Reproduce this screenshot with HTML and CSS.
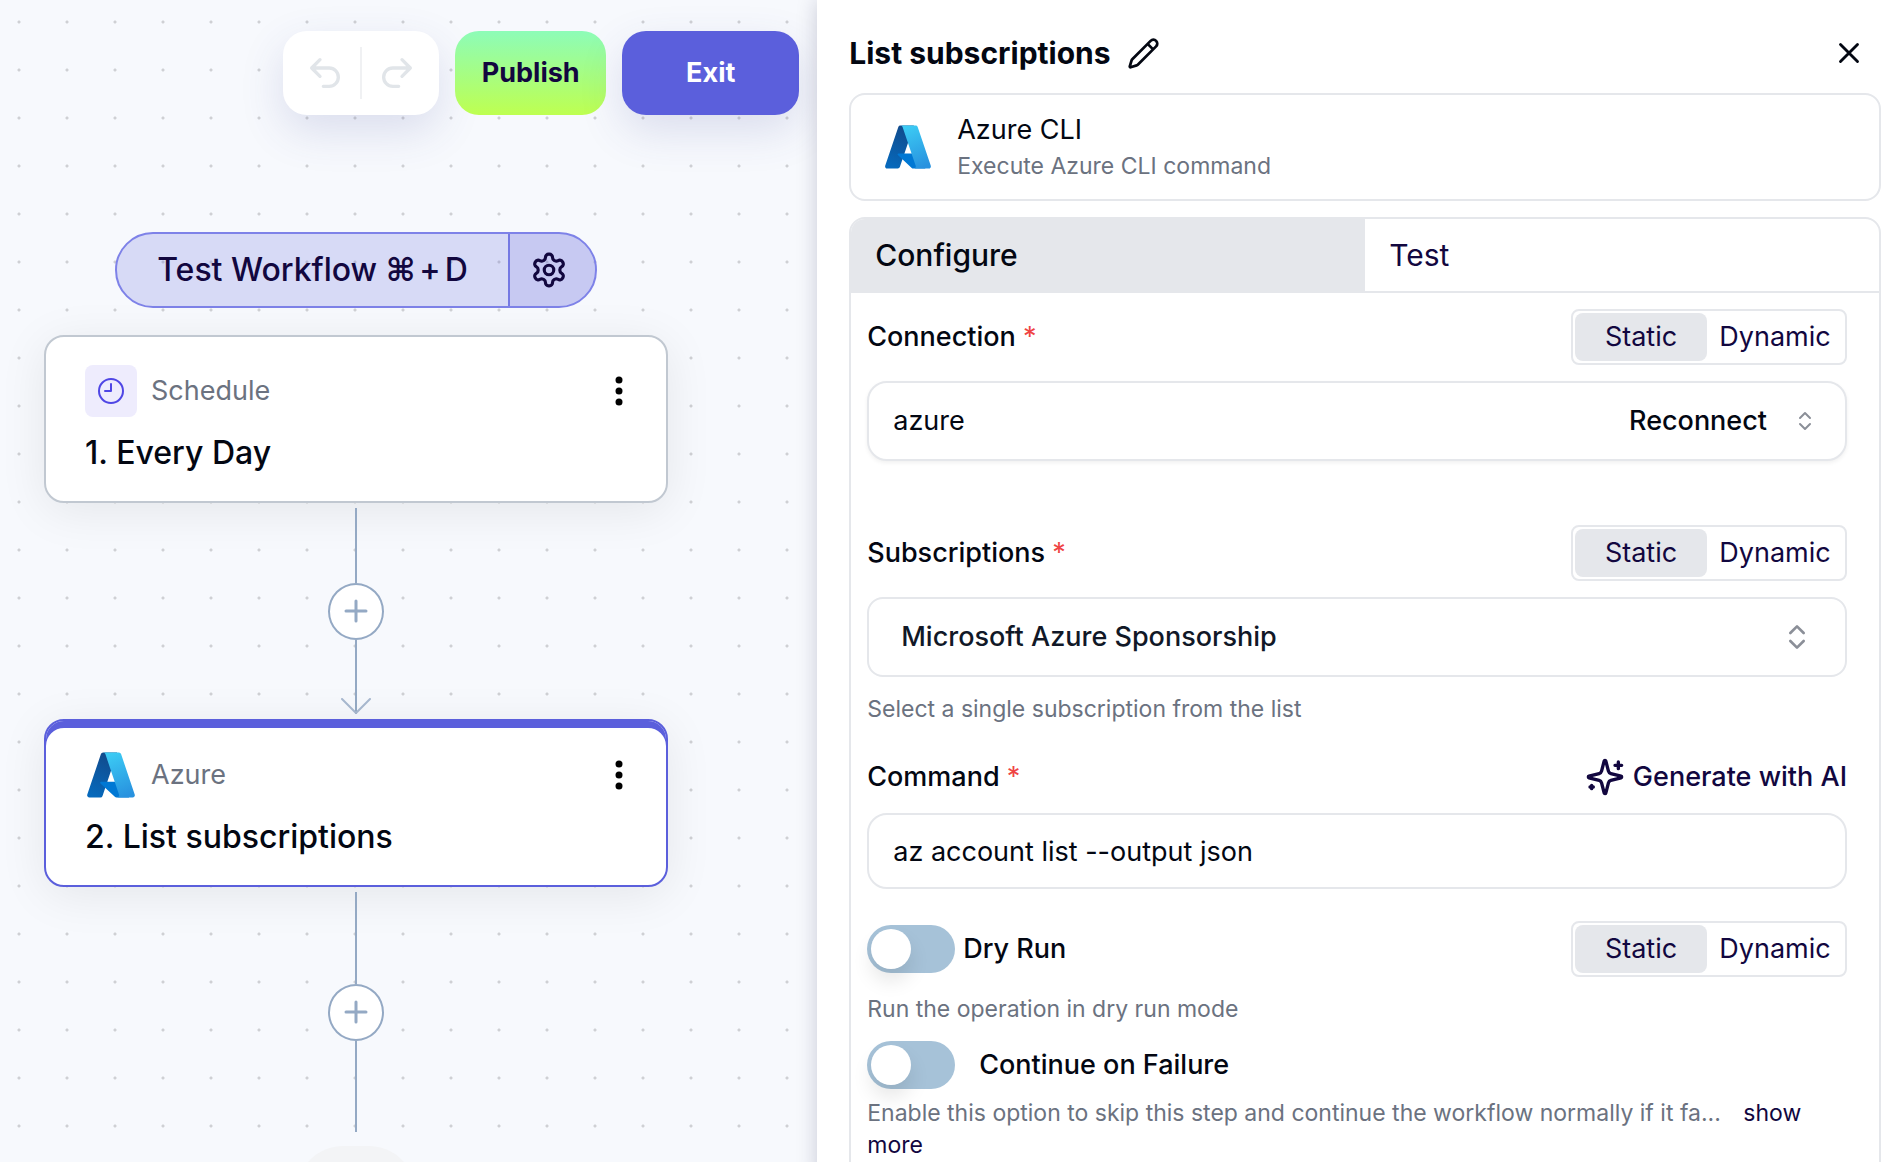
FILE: index.html
```html
<!DOCTYPE html>
<html lang="en">
<head>
    <meta charset="UTF-8">
    <meta name="viewport" content="width=device-width, initial-scale=1.0">
    <title>Workflow Editor</title>
    <link rel="stylesheet" href="styles.css">
</head>
<body>
    <!-- Shared icons -->
    <svg class="sprite" aria-hidden="true">
        <defs>
            <linearGradient id="azureDark" x1="0.6" y1="0" x2="0.3" y2="1">
                <stop offset="0" stop-color="#114a8b" />
                <stop offset="1" stop-color="#0669bc" />
            </linearGradient>
            <linearGradient id="azureLight" x1="0.3" y1="0" x2="0.6" y2="1">
                <stop offset="0" stop-color="#3ccbf4" />
                <stop offset="1" stop-color="#2892df" />
            </linearGradient>
        </defs>
        <symbol id="azure" viewBox="0 0 96 96">
            <path fill="url(#azureDark)" d="M33.338 6.544h26.038l-27.03 80.087a4.152 4.152 0 0 1-3.933 2.824H8.149a4.145 4.145 0 0 1-3.928-5.47L29.404 9.368a4.152 4.152 0 0 1 3.934-2.825z" />
            <path fill="#0078d4" d="M71.175 60.261h-41.29a1.911 1.911 0 0 0-1.305 3.309l26.532 24.764a4.171 4.171 0 0 0 2.846 1.121h23.38z" />
            <path fill="url(#azureLight)" d="M66.595 9.364a4.145 4.145 0 0 0-3.928-2.82H33.648a4.146 4.146 0 0 1 3.928 2.82l25.184 74.62a4.146 4.146 0 0 1-3.928 5.472h29.02a4.146 4.146 0 0 0 3.927-5.472z" />
        </symbol>
        <symbol id="dots" viewBox="0 0 8 32">
            <circle cx="4" cy="5" r="3.5" />
            <circle cx="4" cy="16" r="3.5" />
            <circle cx="4" cy="27" r="3.5" />
        </symbol>
        <symbol id="updown" viewBox="0 0 24 24">
            <path d="m7 15 5 5 5-5M7 9l5-5 5 5" />
        </symbol>
        <symbol id="plus" viewBox="0 0 24 24">
            <path d="M2 12h20M12 2v20" />
        </symbol>
    </svg>

    <div class="editor">
        <!-- Left side: workflow canvas -->
        <main class="canvas">
            <div class="toolbar">
                <div class="history">
                    <button class="icon-btn" type="button" aria-label="Undo" disabled>
                        <svg class="icon" width="40" height="40" viewBox="0 0 24 24"><path d="M9 14 4 9l5-5M4 9h10.500a5.500 5.500 0 0 1 0 11H11" /></svg>
                    </button>
                    <span class="history-divider"></span>
                    <button class="icon-btn" type="button" aria-label="Redo" disabled>
                        <svg class="icon" width="40" height="40" viewBox="0 0 24 24"><path d="m15 14 5-5-5-5M20 9H9.500a5.500 5.500 0 0 0 0 11H13" /></svg>
                    </button>
                </div>
                <button class="btn btn-publish" type="button">Publish</button>
                <button class="btn btn-exit" type="button">Exit</button>
            </div>

            <div class="flow">
                <div class="test-bar">
                    <button class="test-run" type="button">Test Workflow <span class="keys">⌘</span>+<span class="key-letter">D</span></button>
                    <button class="test-settings" type="button" aria-label="Test settings">
                        <svg class="icon" width="38" height="38" viewBox="0 0 24 24"><path d="M12.220 2h-.440a2 2 0 0 0-2 2v.180a2 2 0 0 1-1 1.730l-.430.250a2 2 0 0 1-2 0l-.150-.080a2 2 0 0 0-2.730.730l-.220.380a2 2 0 0 0 .730 2.730l.150.100a2 2 0 0 1 1 1.720v.510a2 2 0 0 1-1 1.740l-.150.090a2 2 0 0 0-.730 2.730l.220.380a2 2 0 0 0 2.730.730l.150-.080a2 2 0 0 1 2 0l.430.250a2 2 0 0 1 1 1.730V20a2 2 0 0 0 2 2h.440a2 2 0 0 0 2-2v-.180a2 2 0 0 1 1-1.730l.430-.250a2 2 0 0 1 2 0l.150.080a2 2 0 0 0 2.730-.730l.220-.390a2 2 0 0 0-.730-2.730l-.150-.080a2 2 0 0 1-1-1.740v-.500a2 2 0 0 1 1-1.740l.150-.090a2 2 0 0 0 .730-2.730l-.220-.380a2 2 0 0 0-2.730-.730l-.150.080a2 2 0 0 1-2 0l-.430-.250a2 2 0 0 1-1-1.730V4a2 2 0 0 0-2-2z" /><circle cx="12" cy="12" r="3" /></svg>
                    </button>
                </div>

                <section class="node">
                    <div class="node-head">
                        <span class="node-tile">
                            <svg class="icon" width="28" height="28" viewBox="0 0 28 28"><circle cx="14" cy="14" r="12" /><path d="M14 7v7H8" /></svg>
                        </span>
                        <span class="node-type">Schedule</span>
                        <button class="icon-btn node-menu" type="button" aria-label="Step menu"><svg width="8" height="32"><use href="#dots" /></svg></button>
                    </div>
                    <h2 class="node-title">1. Every Day</h2>
                </section>

                <div class="connector">
                    <span class="line"></span>
                    <button class="add-btn" type="button" aria-label="Add step"><svg class="icon" width="24" height="24"><use href="#plus" /></svg></button>
                    <span class="line line-arrow">
                        <svg class="icon" width="30" height="16" viewBox="0 0 30 16"><path d="m1 1 14 14L29 1" /></svg>
                    </span>
                </div>

                <section class="node node-active">
                    <div class="node-head">
                        <svg width="52" height="52"><use href="#azure" /></svg>
                        <span class="node-type">Azure</span>
                        <button class="icon-btn node-menu" type="button" aria-label="Step menu"><svg width="8" height="32"><use href="#dots" /></svg></button>
                    </div>
                    <h2 class="node-title">2. List subscriptions</h2>
                </section>

                <div class="connector connector-last">
                    <span class="line"></span>
                    <button class="add-btn" type="button" aria-label="Add step"><svg class="icon" width="24" height="24"><use href="#plus" /></svg></button>
                    <span class="line"></span>
                </div>

                <div class="end-node"></div>
            </div>
        </main>

        <!-- Right side: step settings -->
        <aside class="panel">
            <header class="panel-head">
                <h1 class="panel-title">List subscriptions</h1>
                <button class="icon-btn" type="button" aria-label="Rename step">
                    <svg class="icon" width="33" height="33" viewBox="0 0 24 24"><path d="M21.174 6.812a1 1 0 0 0-3.986-3.987L3.842 16.174a2 2 0 0 0-.500.830l-1.321 4.352a.500.500 0 0 0 .623.622l4.353-1.320a2 2 0 0 0 .830-.497zM15 5l4 4" /></svg>
                </button>
                <button class="icon-btn close-btn" type="button" aria-label="Close">
                    <svg class="icon" width="34" height="34" viewBox="0 0 24 24"><path d="M18 6 6 18M6 6l12 12" /></svg>
                </button>
            </header>

            <div class="action-card">
                <svg width="50" height="50"><use href="#azure" /></svg>
                <div class="action-text">
                    <div class="action-name">Azure CLI</div>
                    <div class="hint">Execute Azure CLI command</div>
                </div>
            </div>

            <div class="settings">
                <div class="tabs" role="tablist">
                    <button class="tab tab-active" type="button" role="tab" aria-selected="true">Configure</button>
                    <button class="tab" type="button" role="tab" aria-selected="false">Test</button>
                </div>

                <form class="form">
                    <div class="field-head">
                        <label class="label" for="connection">Connection <span class="required">*</span></label>
                        <div class="mode">
                            <button class="mode-btn mode-active" type="button">Static</button>
                            <button class="mode-btn" type="button">Dynamic</button>
                        </div>
                    </div>
                    <div class="box box-connection">
                        <select class="control" id="connection">
                            <option>azure</option>
                        </select>
                        <button class="reconnect" type="button">Reconnect</button>
                        <svg class="icon chevrons" width="24" height="24"><use href="#updown" /></svg>
                    </div>

                    <div class="field-head">
                        <label class="label" for="subscriptions">Subscriptions <span class="required">*</span></label>
                        <div class="mode">
                            <button class="mode-btn mode-active" type="button">Static</button>
                            <button class="mode-btn" type="button">Dynamic</button>
                        </div>
                    </div>
                    <div class="box box-subscriptions">
                        <select class="control" id="subscriptions">
                            <option>Microsoft Azure Sponsorship</option>
                        </select>
                        <svg class="icon chevrons" width="32" height="32"><use href="#updown" /></svg>
                    </div>
                    <p class="hint">Select a single subscription from the list</p>

                    <div class="field-head field-head-command">
                        <label class="label" for="command">Command <span class="required">*</span></label>
                        <button class="generate" type="button">
                            <svg class="icon" width="40" height="40" viewBox="0 0 24 24"><path d="M9.937 15.500A2 2 0 0 0 8.500 14.063l-6.135-1.582a.500.500 0 0 1 0-.962L8.500 9.936A2 2 0 0 0 9.937 8.500l1.582-6.135a.500.500 0 0 1 .963 0L14.063 8.500A2 2 0 0 0 15.500 9.937l6.135 1.581a.500.500 0 0 1 0 .964L15.500 14.063a2 2 0 0 0-1.437 1.437l-1.582 6.135a.500.500 0 0 1-.963 0zM20 3v4M22 5h-4M4 17v2M5 18H3" /></svg>
                            Generate with AI
                        </button>
                    </div>
                    <input class="box command" type="text" id="command" value="az account list --output json">

                    <div class="field-head field-head-switch">
                        <label class="label switch-label"><input class="switch" type="checkbox">Dry Run</label>
                        <div class="mode">
                            <button class="mode-btn mode-active" type="button">Static</button>
                            <button class="mode-btn" type="button">Dynamic</button>
                        </div>
                    </div>
                    <p class="hint">Run the operation in dry run mode</p>

                    <label class="label switch-label switch-label-wide"><input class="switch" type="checkbox">Continue on Failure</label>
                    <p class="hint hint-failure">Enable this option to skip this step and continue the workflow normally if it fa... <a class="more" href="#">show more</a></p>
                </form>
            </div>
        </aside>
    </div>
</body>
</html>
```
FILE: styles.css
```css
/* Global Styles */
* {
    box-sizing: border-box;
}

body {
    margin: 0;
    font-family: 'Inter', 'Liberation Sans', sans-serif;
    font-size: 27px;
    line-height: 36px;
    color: #030712;
    background: #fff;
}

h1, h2, p {
    margin: 0;
}

button, input, select {
    font: inherit;
    color: inherit;
}

button {
    padding: 0;
    border: none;
    background: none;
    cursor: pointer;
}

svg {
    display: block;
    flex-shrink: 0;
}

.sprite {
    position: absolute;
    width: 0;
    height: 0;
}

.icon {
    fill: none;
    stroke: currentColor;
    stroke-width: 2;
    stroke-linecap: round;
    stroke-linejoin: round;
}

.icon-btn {
    display: flex;
    align-items: center;
    justify-content: center;
}

.editor {
    display: grid;
    grid-template-columns: 25fr 33fr;
    height: 100vh;
    overflow: hidden;
}

/* Canvas */
.canvas {
    overflow: hidden;
    background-color: #f7f9fd;
    background-image: radial-gradient(circle, #cfd0d4 1px, transparent 2px);
    background-size: 48px 48px;
    background-position: -5px -2px;
}

.toolbar {
    display: flex;
    justify-content: flex-end;
    gap: 16px;
    padding: 31px 18px 0;
}

.history {
    display: flex;
    align-items: center;
    justify-content: center;
    gap: 15px;
    width: 156px;
    height: 84px;
    border-radius: 24px;
    background: #fff;
    color: #e1e5e9;
    box-shadow: 0 16px 44px rgba(60, 64, 150, 0.15);
}

.history-divider {
    width: 2px;
    height: 52px;
    background: #f0f1f3;
}

.btn {
    height: 84px;
    border-radius: 24px;
    font-weight: 700;
}

.btn-publish {
    width: 151px;
    color: #12073f;
    background: linear-gradient(#8dfcb8, #beff50);
}

.btn-exit {
    width: 177px;
    color: #fff;
    background: #5b5fdc;
    box-shadow: 0 16px 44px rgba(60, 64, 150, 0.15);
}

.flow {
    display: flex;
    flex-direction: column;
    align-items: center;
    width: 624px;
    margin: 117px 0 0 44px;
}

/* Test button */
.test-bar {
    display: flex;
    width: 482px;
    height: 76px;
    margin-bottom: 27px;
    border: 2px solid #7e82e8;
    border-radius: 38px;
    overflow: hidden;
    color: #12073f;
    background: rgba(91, 95, 220, 0.2);
}

.test-run {
    flex: 1;
    font-size: 32px;
    font-weight: 500;
}

.keys {
    margin-right: 4px;
    font-family: 'DejaVu Sans', sans-serif;
    font-weight: 700;
}

.key-letter {
    margin-left: 4px;
}

.test-settings {
    display: flex;
    align-items: center;
    justify-content: center;
    width: 87px;
    padding-right: 8px;
    border-left: 2px solid #7579e3;
    background: rgba(91, 95, 220, 0.13);
}

/* Nodes */
.node {
    width: 100%;
    height: 168px;
    padding: 28px 39px;
    border: 2px solid #c1c8d1;
    border-radius: 20px;
    background: #fff;
    box-shadow: 0 8px 48px rgba(0, 0, 0, 0.08);
}

.node-active {
    border-color: #5b5fdc;
    box-shadow: inset 0 7px #5b5fdc, 0 8px 48px rgba(0, 0, 0, 0.08);
}

.node-head {
    display: flex;
    align-items: center;
    gap: 14px;
    margin-bottom: 14px;
}

.node-tile {
    display: flex;
    align-items: center;
    justify-content: center;
    width: 52px;
    height: 52px;
    border-radius: 8px;
    color: #4f46e5;
    background: #eeecfd;
}

.node-type {
    flex: 1;
    color: #6b7280;
}

.node-menu {
    width: 16px;
}

.node-title {
    font-size: 32px;
    font-weight: 500;
    line-height: 44px;
}

/* Connectors */
.connector {
    display: flex;
    flex-direction: column;
    align-items: center;
    height: 216px;
    padding: 5px 0;
}

.connector-last {
    height: 259px;
    padding-bottom: 14px;
}

.line {
    flex: 1;
    width: 2px;
    background: #94a9c4;
}

.line-arrow {
    display: flex;
    align-items: flex-end;
    justify-content: center;
    color: #a9b9d0;
}

.add-btn {
    display: flex;
    align-items: center;
    justify-content: center;
    width: 56px;
    height: 57px;
    border: 2px solid #94a9c4;
    border-radius: 50%;
    color: #94a9c4;
    background: #fff;
}

.add-btn .icon {
    stroke-width: 3;
}

.end-node {
    width: 118px;
    height: 92px;
    border-radius: 46px;
    background: #f3f4f6;
}

/* Panel */
.panel {
    position: relative;
    padding: 31px 15px 0 32px;
    background: #fff;
    box-shadow: 0 0 20px rgba(20, 20, 60, 0.2);
}

.panel-head {
    display: flex;
    align-items: center;
    gap: 16px;
    height: 44px;
    margin-bottom: 18px;
}

.panel-title {
    font-size: 30px;
    font-weight: 700;
}

.close-btn {
    margin-left: auto;
    margin-right: 15px;
}

.action-card {
    display: flex;
    align-items: center;
    gap: 24px;
    height: 108px;
    margin-bottom: 16px;
    padding-left: 32px;
    border: 2px solid #e5e7eb;
    border-radius: 16px;
}

.action-text {
    display: grid;
    gap: 2px;
}

.hint {
    font-size: 23px;
    line-height: 32px;
    color: #6b7280;
}

.settings {
    border: 2px solid #e5e7eb;
    border-radius: 16px;
    overflow: hidden;
}

.tabs {
    display: flex;
    border-bottom: 2px solid #e5e7eb;
}

.tab {
    flex: 1;
    height: 72px;
    padding: 0 24px;
    font-size: 30px;
    text-align: left;
    color: #12073f;
}

.tab-active {
    font-weight: 500;
    color: #030712;
    background: #e5e7eb;
}

/* Form */
.form {
    padding: 16px 32px 16px 16px;
}

.field-head {
    display: flex;
    align-items: center;
    justify-content: space-between;
    margin-bottom: 16px;
}

.field-head-command {
    height: 40px;
    margin-top: 32px;
}

.field-head-switch {
    margin-top: 32px;
}

.label {
    font-weight: 500;
}

.required {
    font-weight: 400;
    color: #ef4444;
}

.mode {
    display: flex;
    width: 276px;
    height: 56px;
    padding: 2px;
    border: 2px solid #e5e7eb;
    border-radius: 8px;
}

.mode-btn {
    flex: 1;
    border-radius: 8px;
    color: #12073f;
}

.mode-active {
    flex: 0 0 132px;
    background: #e5e7eb;
}

.box {
    display: flex;
    align-items: center;
    width: 100%;
    height: 80px;
    border: 2px solid #e5e7eb;
    border-radius: 20px;
    background: #fff;
}

.box-connection {
    margin-bottom: 64px;
    padding: 0 28px 0 24px;
    box-shadow: 0 2px 4px rgba(0, 0, 0, 0.06);
}

.box-subscriptions {
    margin-bottom: 16px;
    padding: 0 32px;
    border-radius: 16px;
    font-weight: 500;
    color: #111827;
}

.control {
    flex: 1;
    min-width: 0;
    height: 100%;
    padding: 0;
    border: none;
    outline: none;
    appearance: none;
    background: none;
}

.reconnect {
    margin-right: 26px;
    font-weight: 500;
}

.chevrons {
    color: #8b8f98;
}

.generate {
    display: flex;
    align-items: center;
    gap: 8px;
    font-weight: 500;
    color: #12073f;
}

.command {
    height: 76px;
    padding: 0 24px;
}

/* Switches */
.switch-label {
    display: flex;
    align-items: center;
    gap: 8px;
}

.switch-label-wide {
    gap: 24px;
    margin: 16px 0 8px;
}

.switch {
    width: 88px;
    height: 48px;
    margin: 0;
    padding: 4px;
    border-radius: 24px;
    appearance: none;
    background: #a6c2d8;
}

.switch::before {
    content: '';
    display: block;
    width: 40px;
    height: 40px;
    border-radius: 50%;
    background: #fff;
    box-shadow: 0 12px 20px rgba(0, 0, 0, 0.1);
}

.more {
    margin-left: 16px;
    color: #12073f;
    text-decoration: none;
}
```
